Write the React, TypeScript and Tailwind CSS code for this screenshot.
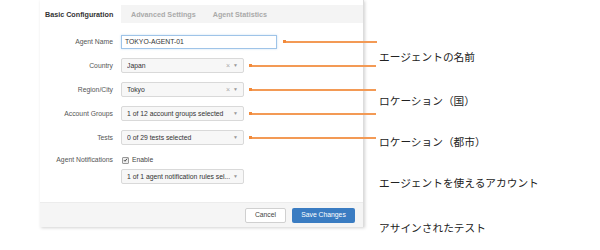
import React from "react";

const ORANGE = "bg-[#f28a3a]";

// dot + leader line that runs out to the annotation column
function Leader({ width, gap }: { width: string; gap: string }) {
  return (
    <div className={`flex items-center ${gap} ${width} shrink-0`}>
      <span className={`w-[3px] h-[3px] shrink-0 ${ORANGE}`} />
      <span className="h-[2px] flex-1 bg-[#f39a55]" />
    </div>
  );
}

function Select({ value, clearable = false }: { value: string; clearable?: boolean }) {
  return (
    <div className="w-[123px] h-[15px] shrink-0 flex items-center rounded-[2px] border border-[#d9d9d9] bg-[#f7f7f7] pl-[5px] pr-[5px] text-[#333]">
      <span className="flex-1 truncate">{value}</span>
      {clearable && <span className="text-[#aaa] text-[7px] mr-[3px] leading-none">×</span>}
      <span className="text-[#999] text-[5px] leading-none">▼</span>
    </div>
  );
}

function Row({ label, children }: { label: string; children: React.ReactNode }) {
  return (
    <div className="flex items-center h-[15px]">
      <div className="w-[73px] shrink-0 text-right text-[#555]">{label}</div>
      <div className="ml-[8px] flex items-center">{children}</div>
    </div>
  );
}

const notes = [
  { text: "エージェントの名前", mt: "mt-[49px]" },
  { text: "ロケーション（国）", mt: "mt-[28px]" },
  { text: "ロケーション（都市）", mt: "mt-[25px]" },
  { text: "エージェントを使えるアカウント", mt: "mt-[25px]" },
  { text: "アサインされたテスト", mt: "mt-[29px]" },
];

export default function App() {
  return (
    <div className="w-[600px] h-[250px] bg-white flex overflow-hidden font-['Liberation_Sans',Arial,sans-serif] text-[6.8px] leading-[8px]">
      {/* Config panel */}
      <div className="ml-[40px] w-[324px] h-[227px] shrink-0 flex flex-col bg-white border-r border-[#dcdcdc] shadow-[1px_1px_3px_rgba(0,0,0,0.18)]">
        {/* Tabs */}
        <div className="flex h-[23px] pt-[5px]">
          <div className="w-[81px] pl-[5px] pt-[6px] font-bold text-[7.2px] text-[#333]">Basic Configuration</div>
          <div className="flex-1 flex bg-[#f4f4f4] pt-[6px] pl-[10px] gap-[17px] font-bold text-[7.2px] text-[#aaa]">
            <span>Advanced Settings</span>
            <span>Agent Statistics</span>
          </div>
        </div>

        {/* Form */}
        <div className="flex flex-col gap-[9px] pt-[11px]">
          <Row label="Agent Name">
            <div className="w-[156px] h-[14px] shrink-0 flex items-center border border-[#9fc4e8] bg-white pl-[3px] text-[#333] shadow-[0_0_2px_rgba(102,160,220,0.35)]">
              TOKYO-AGENT-01
            </div>
            <Leader width="w-[94px]" gap="ml-[6px]" />
          </Row>
          <Row label="Country">
            <Select value="Japan" clearable />
            <Leader width="w-[127px]" gap="ml-[5px]" />
          </Row>
          <Row label="Region/City">
            <Select value="Tokyo" clearable />
            <Leader width="w-[127px]" gap="ml-[5px]" />
          </Row>
          <Row label="Account Groups">
            <Select value="1 of 12 account groups selected" />
            <Leader width="w-[127px]" gap="ml-[5px]" />
          </Row>
          <Row label="Tests">
            <Select value="0 of 29 tests selected" />
            <Leader width="w-[127px]" gap="ml-[5px]" />
          </Row>
        </div>

        <div className="flex mt-[11px]">
          <div className="w-[73px] shrink-0 text-right text-[#555]">Agent Notifications</div>
          <div className="ml-[8px] flex flex-col">
            <div className="flex items-center h-[8px] pl-[1px]">
              <span className="w-[7px] h-[7px] rounded-[1px] border border-[#999] bg-[#eee] flex items-center justify-center">
                <svg viewBox="0 0 8 8" className="w-[6px] h-[6px]">
                  <path d="M1.5 4.2 L3.2 6 L6.6 1.8" fill="none" stroke="#333" strokeWidth="1.4" />
                </svg>
              </span>
              <span className="ml-[3px] text-[#444]">Enable</span>
            </div>
            <div className="mt-[5px]">
              <Select value="1 of 1 agent notification rules sel..." />
            </div>
          </div>
        </div>

        {/* Footer */}
        <div className="mt-auto h-[25px] flex items-center justify-end gap-[6px] pr-[8px] bg-[#f5f5f5] border-t border-[#ececec]">
          <button className="w-[41px] h-[15px] rounded-[2px] border border-[#d0d0d0] bg-white text-[#444]">Cancel</button>
          <button className="w-[63px] h-[15px] rounded-[2px] bg-[#3a7cc2] text-white">Save Changes</button>
        </div>
      </div>

      {/* Annotation labels */}
      <div className="ml-[15px] flex flex-col font-['Noto_Sans_CJK_JP',sans-serif] text-[10.7px] leading-[16px] text-[#222]">
        {notes.map((n) => (
          <div key={n.text} className={n.mt}>{n.text}</div>
        ))}
      </div>
    </div>
  );
}
